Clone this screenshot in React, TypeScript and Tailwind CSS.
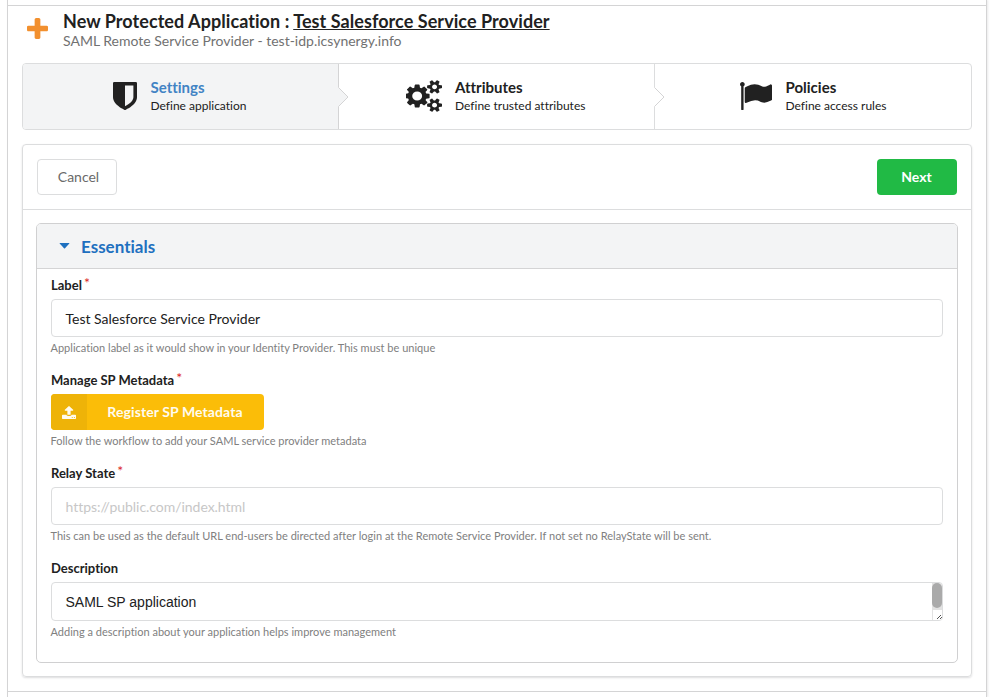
import React from "react";

const FLAG =
  "M320 256q0 72-64 110v1266q0 13-9.5 22.5t-22.5 9.5h-64q-13 0-22.5-9.5t-9.5-22.5v-1266q-64-38-64-110 0-53 37.5-90.5t90.5-37.5 90.5 37.5 37.5 90.5zm1472 64v763q0 25-12.5 38.5t-39.5 27.5q-215 116-369 116-61 0-123.5-22t-108.5-48-115.5-48-142.5-22q-192 0-464 146-17 9-33 9-26 0-45-19t-19-45v-742q0-32 31-55 21-14 79-43 236-120 421-120 107 0 200 29t219 88q38 19 88 19 54 0 117.5-21t110-47 88-47 54.5-21q26 0 45 19t19 45z";
const SHIELD =
  "M1344 960v-640h-448v1137q119-63 213-137 235-184 235-360zm192-768v768q0 86-33.5 170.5t-83 150-118 127.5-126.5 103-121 77.5-89.5 49.5-42.5 20q-12 6-26 6t-26-6q-16-7-42.5-20t-89.5-49.5-121-77.5-126.5-103-118-127.5-83-150-33.5-170.5v-768q0-26 19-45t45-19h1152q26 0 45 19t19 45z";
const COGS =
  "M832 896q0-106-75-181t-181-75-181 75-75 181 75 181 181 75 181-75 75-181zm768 512q0-52-38-90t-90-38-90 38-38 90q0 53 37.5 90.5t90.5 37.5 90.5-37.5 37.5-90.5zm0-1024q0-52-38-90t-90-38-90 38-38 90q0 53 37.5 90.5t90.5 37.5 90.5-37.5 37.5-90.5zm-384 421v185q0 10-7 19.5t-16 10.5l-155 24q-11 35-32 76 34 48 90 115 7 11 7 20 0 12-7 19-23 30-82.5 89.5t-78.5 59.5q-11 0-21-7l-115-90q-37 19-77 31-11 108-23 155-7 24-30 24h-186q-11 0-20-7.5t-10-17.5l-23-153q-34-10-75-31l-118 89q-7 7-20 7-11 0-21-8-144-133-144-160 0-9 7-19 10-14 41-53t47-61q-23-44-35-82l-152-24q-10-1-17-9.5t-7-19.5v-185q0-10 7-19.5t16-10.5l155-24q11-35 32-76-34-48-90-115-7-11-7-20 0-12 7-20 22-30 82-89t79-59q11 0 21 7l115 90q34-18 77-32 11-108 23-154 7-24 30-24h186q11 0 20 7.5t10 17.5l23 153q34 10 75 31l118-89q8-7 20-7 11 0 21 8 144 133 144 160 0 8-7 19-12 16-42 54t-45 60q23 48 34 82l152 23q10 2 17 10.5t7 19.5zm640 533v140q0 16-149 31-12 27-30 52 51 113 51 138 0 4-4 7-122 71-124 71-8 0-46-47t-52-68q-20 2-30 2t-30-2q-14 21-52 68t-46 47q-2 0-124-71-4-3-4-7 0-25 51-138-18-25-30-52-149-15-149-31v-140q0-16 149-31 13-29 30-52-51-113-51-138 0-4 4-7 4-2 35-20t59-34 30-16q8 0 46 46.5t52 67.5q20-2 30-2t30 2q51-71 92-112l6-2q4 0 124 70 4 3 4 7 0 25-51 138 17 23 30 52 149 15 149 31zm0-1024v140q0 16-149 31-12 27-30 52 51 113 51 138 0 4-4 7-122 71-124 71-8 0-46-47t-52-68q-20 2-30 2t-30-2q-14 21-52 68t-46 47q-2 0-124-71-4-3-4-7 0-25 51-138-18-25-30-52-149-15-149-31v-140q0-16 149-31 13-29 30-52-51-113-51-138 0-4 4-7 4-2 35-20t59-34 30-16q8 0 46 46.5t52 67.5q20-2 30-2t30 2q51-71 92-112l6-2q4 0 124 70 4 3 4 7 0 25-51 138 17 23 30 52 149 15 149 31z";
const UPLOAD =
  "M1344 1472q0-26-19-45t-45-19-45 19-19 45 19 45 45 19 45-19 19-45zm256 0q0-26-19-45t-45-19-45 19-19 45 19 45 45 19 45-19 19-45zm128-224v320q0 40-28 68t-68 28h-1472q-40 0-68-28t-28-68v-320q0-40 28-68t68-28h427q21 56 70.5 92t110.5 36h256q61 0 110.5-36t70.5-92h427q40 0 68 28t28 68zm-325-648q-17 40-59 40h-256v448q0 26-19 45t-45 19h-256q-26 0-45-19t-19-45v-448h-256q-42 0-59-40-17-39 14-69l448-448q18-19 45-19t45 19l448 448q31 30 14 69z";
const PLUS =
  "M1600 736v192q0 40-28 68t-68 28h-416v416q0 40-28 68t-68 28h-192q-40 0-68-28t-28-68v-416h-416q-40 0-68-28t-28-68v-192q0-40 28-68t68-28h416v-416q0-40 28-68t68-28h192q40 0 68 28t28 68v416h416q40 0 68 28t28 68z";

function Glyph({ path, box, className }: { path: string; box: string; className: string }) {
  return (
    <svg viewBox={box} preserveAspectRatio="none" fill="currentColor" className={`block shrink-0 ${className}`}>
      <path d={path} />
    </svg>
  );
}

function Step({
  icon,
  title,
  text,
  className,
  titleClass = "",
  arrow,
}: {
  icon: React.ReactNode;
  title: string;
  text: string;
  className: string;
  titleClass?: string;
  arrow?: string;
}) {
  return (
    <div className={`relative flex h-full items-start ${className}`}>
      {icon}
      <div className="pt-[14px]">
        <div className={`text-[15px] leading-[18px] font-bold ${titleClass}`}>{title}</div>
        <div className="mt-px text-[12px] leading-[17px]">{text}</div>
      </div>
      {arrow && (
        <svg viewBox="0 0 11 20" className="absolute top-[23px] -right-[11px] z-10 h-5 w-[11px]">
          <path d="M0 0L10 10L0 20Z" className={arrow} />
          <path d="M0.5 0.5L10 10L0.5 19.5" fill="none" stroke="#d4d4d5" />
        </svg>
      )}
    </div>
  );
}

function Label({ text, required }: { text: string; required?: boolean }) {
  return (
    <div className="flex h-[18px] items-start text-[13px] leading-[18px] font-bold">
      {text}
      {required && <span className="-mt-[2px] ml-[2px] text-[14px] font-normal text-[#db2828]">*</span>}
    </div>
  );
}

function Help({ text }: { text: string }) {
  return <div className="mt-[3px] -ml-px h-4 pl-[0.5px] text-[11px] leading-4 tracking-[0.01px] text-[#808080]">{text}</div>;
}

export default function App() {
  return (
    <div className="h-[697px] w-[994px] overflow-hidden bg-white pl-[7px] font-['Lato',sans-serif] text-[14px] text-[#212121] [font-variant-ligatures:none]">
      <div className="h-full w-[980px] border-x border-[#d4d4d5] pt-[5px] shadow-[1px_0_2px_#22242618]">
        <div className="h-[687px] border-y border-[#d4d4d5] px-[14px]">
          <header className="flex h-[57px] items-start">
            <Glyph path={PLUS} box="192 128 1408 1408" className="mt-3 ml-[5px] h-[21px] w-[21px] text-[#f2902f]" />
            <div className="ml-[15px] pt-1">
              <h1 className="text-[18px] leading-[22px] font-bold tracking-[0.06px]">
                New Protected Application : <span className="underline">Test Salesforce Service Provider</span>
              </h1>
              <p className="text-[14px] leading-[18px] text-[#717171]">
                SAML Remote Service Provider - test-idp.icsynergy.info
              </p>
            </div>
          </header>

          <nav className="flex h-[67px] w-[950px] rounded border border-[#dcddde]">
            <Step
              className="w-[316px] rounded-l-[3px] border-r border-[#d4d4d5] bg-[#f3f4f5] pl-[90px]"
              icon={<Glyph path={SHIELD} box="256 128 1280 1536" className="mt-[18px] mr-[13.5px] h-[28px] w-6" />}
              title="Settings"
              text="Define application"
              titleClass="text-[#4183c4]"
              arrow="fill-[#f3f4f5]"
            />
            <Step
              className="w-[316px] border-r border-[#dcddde] pl-[67px]"
              icon={<Glyph path={COGS} box="0 0 1856 1792" className="mt-4 mr-[13px] h-8 w-9" />}
              title="Attributes"
              text="Define trusted attributes"
              arrow="fill-white"
            />
            <Step
              className="flex-1 pl-[84.5px]"
              icon={<Glyph path={FLAG} box="64 128 1728 1536" className="mt-[18px] mr-[14px] h-[28px] w-8" />}
              title="Policies"
              text="Define access rules"
            />
          </nav>

          <main className="mt-[14px] h-[533px] w-[950px] rounded border border-[#dcddde] shadow-[0_1px_2px_#22242626]">
            <div className="flex h-[65px] items-start justify-between border-b border-[#dcddde] px-[14px] pt-[14px]">
              <button className="h-9 w-20 rounded border border-[#dcddde] pb-[2px] pl-[3px] text-[14px] text-[#6a6a6a]">
                Cancel
              </button>
              <button className="h-9 w-20 rounded bg-[#21ba45] pr-px pb-[2px] text-[14px] font-bold text-white">Next</button>
            </div>

            <section className="mx-[13px] mt-[13px] h-[440px] rounded-[5px] border border-[#d0d0d1]">
              <div className="flex h-[45px] items-center rounded-t border-b border-[#d4d4d5] bg-[#f3f4f5] pl-[22px] text-[#1e70bf]">
                <svg viewBox="0 0 10 6" className="h-[6px] w-[11px]" fill="currentColor">
                  <path d="M0.5 0h9q.7 0 .3.6L5.5 5.2q-.5.5-1 0L.2.6Q-.2 0 .5 0z" />
                </svg>
                <h2 className="ml-[11px] pt-px text-[17px] leading-6 font-bold">Essentials</h2>
              </div>
              <div className="px-[14px] pt-[7px]">
                <Label text="Label" required />
                <div className="mt-[5px] flex h-[38px] items-center rounded border border-[#dcddde] pt-px pl-[13.5px] text-[14px]">
                  Test Salesforce Service Provider
                </div>
                <Help text="Application label as it would show in your Identity Provider. This must be unique" />

                <div className="h-[15px]" />
                <Label text="Manage SP Metadata" required />
                <button className="mt-[5px] flex h-9 w-[213px] items-stretch overflow-hidden rounded bg-[#fbbd08] text-[14px] font-bold text-[#fffbee]">
                  <span className="flex w-9 items-center justify-center bg-[#eeb308]">
                    <Glyph path={UPLOAD} box="64 64 1664 1600" className="h-[13px] w-[14px]" />
                  </span>
                  <span className="flex flex-1 items-center justify-center pr-px pb-[2px] tracking-[0.1px]">
                    Register SP Metadata
                  </span>
                </button>
                <Help text="Follow the workflow to add your SAML service provider metadata" />

                <div className="h-[15px]" />
                <Label text="Relay State" required />
                <div className="mt-[5px] flex h-[38px] items-center rounded border border-[#dcddde] pt-px pl-[13.5px] text-[14px] tracking-[-0.04px] text-[#c7c7c7]">
                  https://public.com/index.html
                </div>
                <Help text="This can be used as the default URL end-users be directed after login at the Remote Service Provider. If not set no RelayState will be sent." />

                <div className="h-[15px]" />
                <Label text="Description" />
                <div className="mt-[5px] flex h-[39px] items-stretch justify-between overflow-hidden rounded border border-[#dcddde] pl-[13.5px]">
                  <span className="self-center pt-[2px] font-['Liberation_Sans',sans-serif] text-[14px]">
                    SAML SP application
                  </span>
                  <div className="flex w-[10px] flex-col bg-[#e2e2e2]">
                    <div className="h-[26px] rounded-full bg-[#aaa]" />
                    <div className="mt-[2px] ml-px flex-1 bg-white">
                      <svg viewBox="0 0 10 10" className="h-[10px] w-[10px]" shapeRendering="crispEdges" fill="#555">
                        <path d="M4 8h1v1H4zM5 7h1v1H5zM6 6h1v1H6zM7 5h1v1H7zM7 8h1v1H7zM8 7h1v1H8z" />
                      </svg>
                    </div>
                  </div>
                </div>
                <Help text="Adding a description about your application helps improve management" />
              </div>
            </section>
          </main>
        </div>
      </div>
    </div>
  );
}
